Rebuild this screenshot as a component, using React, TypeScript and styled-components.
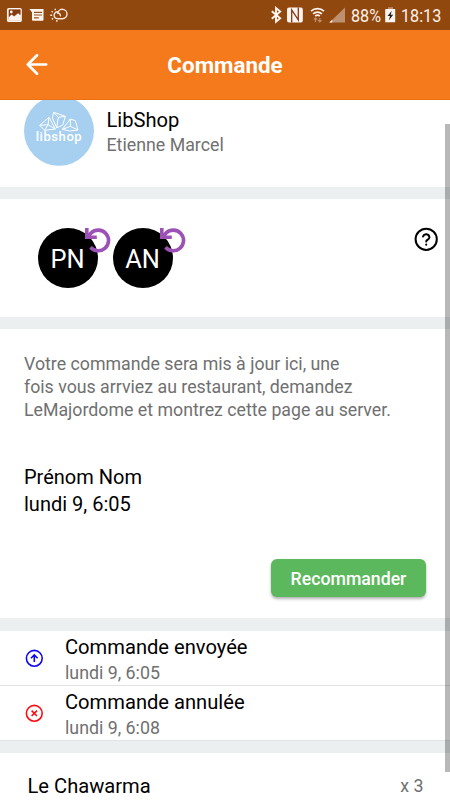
import React from "react";
import styled, { createGlobalStyle } from "styled-components";

const GlobalStyle = createGlobalStyle`
  * { box-sizing: border-box; }
  html, body { margin: 0; padding: 0; background: #fff; overflow: hidden; }
  body { font-family: Roboto, "Noto Sans", sans-serif; color: #000; }
  svg { display: block; flex: none; }
`;

const Screen = styled.div`
  position: relative;
  width: 450px;
  height: 800px;
  display: flex;
  flex-direction: column;
  overflow: hidden;
  background: #fff;
`;

const StatusBar = styled.div`
  flex: none;
  height: 30px;
  display: flex;
  justify-content: space-between;
  background: #91480f;
`;

const StatusText = styled.span<{ $width: number }>`
  width: ${(p) => p.$width}px;
  height: 30px;
  padding-top: 1px;
  font-size: 19px;
  line-height: 30px;
  white-space: nowrap;
  color: #fff1e8;
  transform: scaleX(0.85);
  transform-origin: left center;
`;

const StatusRight = styled.div`
  display: flex;
  width: 180px;
`;

const Header = styled.header`
  flex: none;
  height: 70px;
  display: grid;
  grid-template-columns: 74px 1fr 74px;
  align-items: center;
  background: #f47a1b;
  border-bottom: 1px solid #ea7012;
`;

const BackButton = styled.button`
  height: 69px;
  padding: 0 0 0 25px;
  border: 0;
  background: none;
`;

const Title = styled.h1`
  margin: 0;
  font-size: 22.4px;
  font-weight: 700;
  line-height: 30px;
  text-align: center;
  color: #fff;
`;

const Content = styled.main`
  flex: 1;
  min-height: 0;
  overflow: hidden;
`;

const Band = styled.div<{ $height?: number; $line?: boolean }>`
  height: ${(p) => p.$height ?? 12}px;
  background: #ebefef;
  border-top: ${(p) => (p.$line ? "1px solid #e0e3e3" : "0")};
`;

const Shop = styled.section`
  height: 87px;
  display: flex;
  overflow: hidden;
  padding-left: 24px;
`;

const ShopLogo = styled.div`
  width: 70px;
  height: 70px;
  margin: -4px 12.5px 0 0;
`;

const ShopText = styled.div`
  padding-top: 7px;
`;

const Primary = styled.div<{ $size?: number; $line?: number }>`
  font-size: ${(p) => p.$size ?? 20.15}px;
  line-height: ${(p) => p.$line ?? 26}px;
  white-space: nowrap;
`;

const Secondary = styled.div<{ $gap?: number }>`
  margin-top: ${(p) => p.$gap ?? 1}px;
  font-size: 17.8px;
  line-height: 24px;
  white-space: nowrap;
  color: #707070;
`;

const Guests = styled.section`
  height: 118px;
  display: flex;
  padding: 29px 11px 0 37.5px;
`;

const Guest = styled.div`
  position: relative;
  width: 60px;
  height: 60px;
  margin-right: 15px;
  padding-top: 2px;
  border-radius: 50%;
  background: #000;
  color: #fff;
  font-size: 25.4px;
  line-height: 59px;
  text-align: center;
`;

const GuestBadge = styled.span`
  position: absolute;
  top: 0;
  right: -13.5px;
`;

const HelpButton = styled.button`
  height: 26px;
  margin: -1px 0 0 auto;
  padding: 0;
  border: 0;
  background: none;
`;

const Details = styled.section`
  height: 289px;
  display: flex;
  flex-direction: column;
  padding: 24px 24px 0;
`;

const Notice = styled.p`
  width: 380px;
  margin: 0 0 42px;
  font-size: 17.75px;
  line-height: 23px;
  color: #707070;
`;

const Reorder = styled.button`
  align-self: flex-end;
  width: 155px;
  height: 38px;
  margin-top: 41px;
  padding: 2px 0 0;
  border: 0;
  border-radius: 6px;
  background: #5cb85c;
  box-shadow: 0 2px 3px rgba(0, 0, 0, 0.3);
  color: #fff;
  font-family: inherit;
  font-size: 17.7px;
  font-weight: 500;
`;

const EventRow = styled.div<{ $last?: boolean }>`
  height: ${(p) => (p.$last ? 54 : 55)}px;
  display: flex;
  padding: 3px 0 0 25px;
  border-bottom: ${(p) => (p.$last ? "0" : "1px solid #e1e3e3")};
`;

const EventIcon = styled.div`
  width: 40px;
  padding-top: 15px;
`;

const Item = styled.section`
  display: flex;
  justify-content: space-between;
  padding: 20px 26.5px 0 27.5px;
`;

const Scrollbar = styled.div`
  position: absolute;
  top: 124px;
  right: 0;
  width: 5px;
  height: 648px;
  background: rgba(0, 0, 0, 0.28);
`;

const NotificationIcons = () => (
  <svg width="80" height="30" viewBox="0 0 80 30" fill="none">
    <rect x="7.8" y="8.8" width="13.2" height="12.4" rx="1" stroke="#fff4ee" strokeWidth="1.7" />
    <path d="M9 16.5l2.7-2.7 2.4 2.2 3.9-3.7 2.5 2.5V9.5H9z" fill="#843a12" />
    <path d="M8.5 20.5V17.4l3.2-2.8 2.4 2 4-3.4 2.6 2.6v4.7z" fill="#fff4ee" />
    <circle cx="11.3" cy="12" r="1.4" fill="#fff4ee" />
    <path d="M29.3 9h14.2v10.8a1 1 0 0 1-1 1H33a1 1 0 0 1-1-1v-7.5z" fill="#fff4ee" />
    <path d="M34 12.3h8M34 15h8M34 17.8h4.8" stroke="#98501f" strokeWidth="1.2" />
    <path
      d="M58.6 11.9a3.5 3.5 0 0 0-4.5 3.2c0 2.2 1.6 3.6 3.7 3.6h4.8a4.7 4.7 0 1 0-4.9-5.6c1.8 0 2.7 1.2 2.7 2.7"
      stroke="#fbe3d5"
      strokeWidth="1.4"
      strokeLinecap="round"
    />
    <path
      d="M50.2 15.2h2M51.6 11.2l1.3 1M55 8.8l.5 1.4M51.8 19.4l1.3-1M56.8 20v1.8"
      stroke="#fbe3d5"
      strokeWidth="1.4"
    />
  </svg>
);

const ConnectionIcons = () => (
  <svg width="81" height="30" viewBox="270 0 81 30" fill="none">
    <path d="M271.8 11.2l8.4 7-4.2 3.6V8l4.2 3.5-8.4 7.2" stroke="#fff4ee" strokeWidth="1.9" />
    <rect x="287" y="7.5" width="15.8" height="15" rx="2" fill="#fff4ee" />
    <path d="M291.7 22.5V10l6.6 9.8V7.5" stroke="#8d3418" strokeWidth="1.3" />
    <path
      d="M311 11.2a9.5 9.5 0 0 1 13 0M313.1 13.8a6.4 6.4 0 0 1 8.8 0M315.2 16.2a3.4 3.4 0 0 1 4.6 0"
      stroke="#fff4ee"
      strokeWidth="1.7"
    />
    <path
      d="M315.5 22v-4m-1.8 1.7 1.8-1.8 1.8 1.8M319.8 18v4m-1.8-1.8 1.8 1.8 1.8-1.8"
      stroke="#be8e6d"
      strokeWidth="1.2"
    />
    <path d="M345 7.5V22.5H329.5z" fill="#bd9070" />
    <path d="M332.2 19.8V22.5H329.3z" fill="#fff4ee" />
  </svg>
);

const BatteryIcon = () => (
  <svg width="17" height="30" viewBox="384 0 17 30">
    <path d="M388 7.2h5v2h-5z" fill="#be8e6d" />
    <rect x="385.2" y="9" width="10" height="13.3" rx=".6" fill="#fff4ee" />
    <path d="M391.8 10.7l-4.3 5.2h2.5l-1.2 4.5 4.4-5.6h-2.5z" fill="#222" />
  </svg>
);

const BackIcon = () => (
  <svg width="24" height="24" viewBox="0 0 24 24" fill="none" stroke="#fff" strokeWidth="2.7" strokeLinecap="round" strokeLinejoin="round">
    <path d="M21.2 11.5H2.8M12 2.3l-9.2 9.2 9.2 9.2" />
  </svg>
);

const LibshopLogo = () => (
  <svg width="70" height="70" viewBox="72 18 210 210" fill="none">
    <circle cx="177" cy="122.5" r="105" fill="#a6cff0" />
    <g stroke="#fff" strokeWidth="3" strokeLinejoin="round">
      <path d="M119 106L147 82L166 117L134 121zM119 106L144 104L166 117M147 82L144 104L134 121" />
      <path d="M161 67L196 79L188 106L170 113L157 84zM161 67L175 82L196 79M175 82L170 113" />
      <path d="M187 118L211 87L226 92L234 120L209 123zM187 118L211 109L234 120M211 87L211 109" />
    </g>
    <text
      x="107"
      y="153"
      fill="#fff"
      fontFamily="Roboto, sans-serif"
      fontSize="39"
      fontWeight="500"
      textLength="138"
    >
      libshop
    </text>
  </svg>
);

const UndoIcon = () => (
  <svg width="26" height="26" viewBox="0 0 26 26" fill="none" stroke="#9b51b5" strokeWidth="3.6">
    <path d="M1.8 0V9.3H11.8" />
    <path d="M2.4 8.9L6.2 4.9A10.3 10.3 0 1 1 5.5 19.2" />
  </svg>
);

const HelpIcon = () => (
  <svg width="26" height="26" viewBox="0 0 26 26" fill="none" stroke="#000" strokeWidth="2" strokeLinecap="round">
    <circle cx="13.2" cy="12.3" r="10.6" />
    <path d="M10 9.5a3.3 3.3 0 0 1 6.4.9c0 2.1-3.2 2.4-3.2 4.2M13.2 17.6v.1" />
  </svg>
);

const SentIcon = () => (
  <svg width="19" height="19" viewBox="0 0 19 19" fill="none" stroke="#1008f0" strokeWidth="1.6">
    <circle cx="9.3" cy="9.3" r="7.9" />
    <path d="M9.3 13V6.2M6 9.3l3.3-3.3 3.3 3.3" />
  </svg>
);

const CancelledIcon = () => (
  <svg width="19" height="19" viewBox="0 0 19 19" fill="none" stroke="#fb0d10" strokeWidth="1.6">
    <circle cx="9.3" cy="9.3" r="7.9" />
    <path d="M6.6 6.6l5.4 5.4M12 6.6L6.6 12" />
  </svg>
);

const guests = ["PN", "AN"];

const events = [
  { label: "Commande envoyée", time: "lundi 9, 6:05", icon: <SentIcon /> },
  { label: "Commande annulée", time: "lundi 9, 6:08", icon: <CancelledIcon /> },
];

export default function App() {
  return (
    <>
      <GlobalStyle />
      <Screen>
        <StatusBar>
          <NotificationIcons />
          <StatusRight>
            <ConnectionIcons />
            <StatusText $width={33}>88%</StatusText>
            <BatteryIcon />
            <StatusText $width={48}>18:13</StatusText>
          </StatusRight>
        </StatusBar>
        <Header>
          <BackButton aria-label="Retour">
            <BackIcon />
          </BackButton>
          <Title>Commande</Title>
        </Header>
        <Content>
          <Shop>
            <ShopLogo>
              <LibshopLogo />
            </ShopLogo>
            <ShopText>
              <Primary>LibShop</Primary>
              <Secondary $gap={0}>Etienne Marcel</Secondary>
            </ShopText>
          </Shop>
          <Band />
          <Guests>
            {guests.map((initials) => (
              <Guest key={initials}>
                {initials}
                <GuestBadge>
                  <UndoIcon />
                </GuestBadge>
              </Guest>
            ))}
            <HelpButton aria-label="Aide">
              <HelpIcon />
            </HelpButton>
          </Guests>
          <Band />
          <Details>
            <Notice>
              Votre commande sera mis à jour ici, une
              <br />
              fois vous arrviez au restaurant, demandez
              <br />
              LeMajordome et montrez cette page au server.
            </Notice>
            <Primary $size={20} $line={27}>Prénom Nom</Primary>
            <Primary $size={20} $line={27}>lundi 9, 6:05</Primary>
            <Reorder>Recommander</Reorder>
          </Details>
          <Band $height={13} />
          {events.map((event, index) => (
            <EventRow key={event.label} $last={index === events.length - 1}>
              <EventIcon>{event.icon}</EventIcon>
              <div>
                <Primary>{event.label}</Primary>
                <Secondary>{event.time}</Secondary>
              </div>
            </EventRow>
          ))}
          <Band $height={13} $line />
          <Item>
            <Primary>Le Chawarma</Primary>
            <Secondary>x 3</Secondary>
          </Item>
        </Content>
        <Scrollbar />
      </Screen>
    </>
  );
}
